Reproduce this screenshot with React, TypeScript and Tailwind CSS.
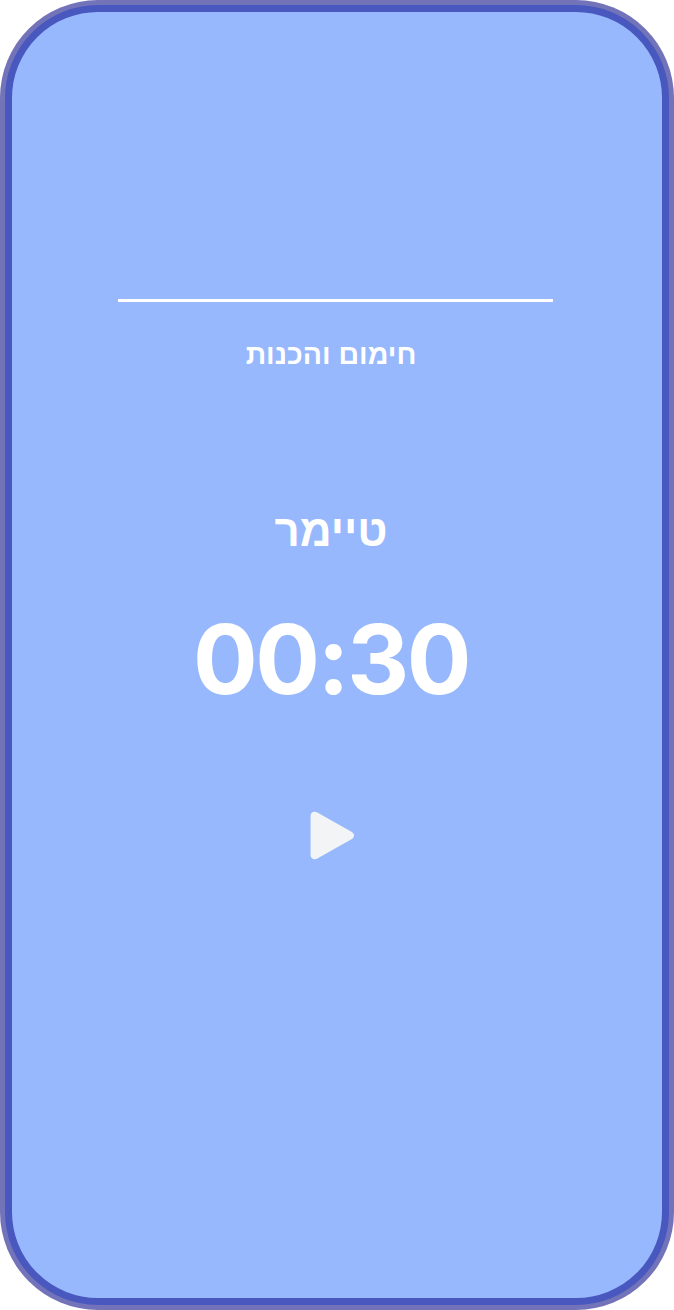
import React from 'react';

export default function App() {
  return (
    <div className="w-[674px] h-[1310px] bg-white">
      <div className="w-full h-full rounded-[98px] bg-[#7373b9] p-[5px]">
        <div
          dir="rtl"
          className="w-full h-full rounded-[93px] border-[7px] border-[#4858bf] bg-[#97b8fd] flex flex-col items-center pr-[12px]"
        >
          {/* divider */}
          <div className="mt-[287px] w-[435px] h-[3px] bg-white ml-[9px]" />

          <h2
            className="mt-[38px] text-[28.5px] font-bold text-white leading-none"
            style={{ fontFamily: '"Liberation Sans", "DejaVu Sans", sans-serif' }}
          >
            חימום והכנות
          </h2>

          <h1
            className="mt-[140px] text-[44px] font-bold text-white leading-none"
            style={{ fontFamily: '"Liberation Sans", "DejaVu Sans", sans-serif' }}
          >
            טיימר
          </h1>

          <div
            dir="ltr"
            className="mt-[58px] text-[96px] font-bold text-white leading-none tracking-tight"
            style={{ fontFamily: 'Inter, "Liberation Sans", sans-serif' }}
          >
            00:30
          </div>

          <button className="mt-[102px]" aria-label="play">
            <svg width="50" height="53" viewBox="0 0 44 50" preserveAspectRatio="none">
              <path
                d="M4 6.5 C4 3 7 1.5 10 3.2 L40 21.5 C43 23.3 43 26.7 40 28.5 L10 46.8 C7 48.5 4 47 4 43.5 Z"
                fill="#f3f4f6"
              />
            </svg>
          </button>
        </div>
      </div>
    </div>
  );
}
